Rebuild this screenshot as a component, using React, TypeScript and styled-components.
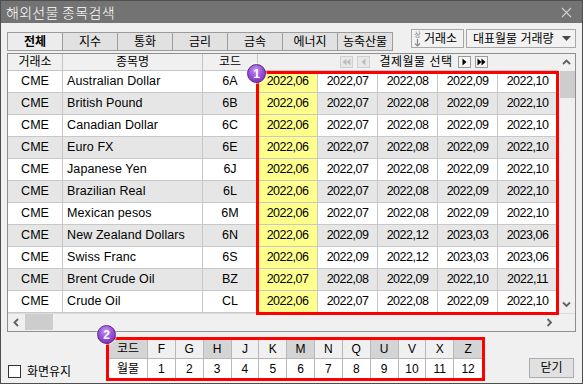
import styled, { createGlobalStyle } from 'styled-components';

const GlobalStyle = createGlobalStyle`
  html, body {
    margin: 0;
    padding: 0;
    background: #ffffff;
  }
  body {
    font-family: 'Liberation Sans', 'Noto Sans CJK KR', sans-serif;
    font-size: 12px;
    color: #000;
  }
  * {
    box-sizing: border-box;
  }
`;

type Row = { ex: string; name: string; code: string; months: string[] };

const m = (list: string) => list.split(' ');

const rows: Row[] = [
  { ex: 'CME', name: 'Australian Dollar', code: '6A', months: m('2022,06 2022,07 2022,08 2022,09 2022,10') },
  { ex: 'CME', name: 'British Pound', code: '6B', months: m('2022,06 2022,07 2022,08 2022,09 2022,10') },
  { ex: 'CME', name: 'Canadian Dollar', code: '6C', months: m('2022,06 2022,07 2022,08 2022,09 2022,10') },
  { ex: 'CME', name: 'Euro FX', code: '6E', months: m('2022,06 2022,07 2022,08 2022,09 2022,10') },
  { ex: 'CME', name: 'Japanese Yen', code: '6J', months: m('2022,06 2022,07 2022,08 2022,09 2022,10') },
  { ex: 'CME', name: 'Brazilian Real', code: '6L', months: m('2022,06 2022,07 2022,08 2022,09 2022,10') },
  { ex: 'CME', name: 'Mexican pesos', code: '6M', months: m('2022,06 2022,07 2022,08 2022,09 2022,10') },
  { ex: 'CME', name: 'New Zealand Dollars', code: '6N', months: m('2022,06 2022,09 2022,12 2023,03 2023,06') },
  { ex: 'CME', name: 'Swiss Franc', code: '6S', months: m('2022,06 2022,09 2022,12 2023,03 2023,06') },
  { ex: 'CME', name: 'Brent Crude Oil', code: 'BZ', months: m('2022,07 2022,08 2022,09 2022,10 2022,11') },
  { ex: 'CME', name: 'Crude Oil', code: 'CL', months: m('2022,06 2022,07 2022,08 2022,09 2022,10') },
];

const tabs = ['전체', '지수', '통화', '금리', '금속', '에너지', '농축산물'];

// 월물 코드표 (진한 칸 = 분기물)
const monthCodes = [
  { c: 'F', n: '1', q: false },
  { c: 'G', n: '2', q: false },
  { c: 'H', n: '3', q: true },
  { c: 'J', n: '4', q: false },
  { c: 'K', n: '5', q: false },
  { c: 'M', n: '6', q: true },
  { c: 'N', n: '7', q: false },
  { c: 'Q', n: '8', q: false },
  { c: 'U', n: '9', q: true },
  { c: 'V', n: '10', q: false },
  { c: 'X', n: '11', q: false },
  { c: 'Z', n: '12', q: true },
];

const COLS = '55px 140px 55px 60px 60px 60px 60px 60px';

function Chevron({ dir }: { dir: 'up' | 'down' | 'left' | 'right' }) {
  const pts = {
    up: '1,6 4.5,2.5 8,6',
    down: '1,2.5 4.5,6 8,2.5',
    left: '6,1 2.5,4.5 6,8',
    right: '2.5,1 6,4.5 2.5,8',
  }[dir];
  return (
    <svg width="9" height="9" viewBox="0 0 9 9">
      <polyline points={pts} fill="none" stroke="#606060" strokeWidth="1.8" />
    </svg>
  );
}

function NavGlyph({ dir, double, color }: { dir: 'l' | 'r'; double?: boolean; color: string }) {
  const one = (x: number) =>
    dir === 'l' ? `${x + 4},1.5 ${x},5 ${x + 4},8.5` : `${x},1.5 ${x + 4},5 ${x},8.5`;
  return (
    <svg width="9" height="10" viewBox="0 0 9 10">
      {double ? (
        <>
          <polygon points={one(0.5)} fill={color} />
          <polygon points={one(4.5)} fill={color} />
        </>
      ) : (
        <polygon points={one(2.5)} fill={color} />
      )}
    </svg>
  );
}

export default function App() {
  return (
    <>
      <GlobalStyle />
      <Styled.Window>
        <Styled.TitleBar>
          <Styled.Title>해외선물 종목검색</Styled.Title>
          <svg width="11" height="11" viewBox="0 0 11 11">
            <path d="M1 1 L10 10 M10 1 L1 10" stroke="#cfcfcf" strokeWidth="1.1" />
          </svg>
        </Styled.TitleBar>

        <Styled.Body>
          <Styled.TopRow>
            <Styled.Tabs>
              {tabs.map((t, i) => (
                <Styled.Tab key={t} $active={i === 0}>
                  {t}
                </Styled.Tab>
              ))}
            </Styled.Tabs>
            <Styled.Tools>
              <Styled.ExchangeBtn>
                <Styled.SortIcon>
                  <span>상</span>
                  <svg width="7" height="8" viewBox="0 0 7 8">
                    <path d="M3.5 0 V7 M1 4.5 L3.5 7 L6 4.5" fill="none" stroke="#8a8a8a" strokeWidth="1.2" />
                  </svg>
                </Styled.SortIcon>
                거래소
              </Styled.ExchangeBtn>
              <Styled.Dropdown>
                대표월물 거래량
                <svg width="9" height="5" viewBox="0 0 9 5">
                  <polygon points="0,0 9,0 4.5,5" fill="#4a4a4a" />
                </svg>
              </Styled.Dropdown>
            </Styled.Tools>
          </Styled.TopRow>

          <Styled.Grid>
            <Styled.GridMain>
              <Styled.Table>
                <Styled.HeaderRow>
                  <Styled.HeaderCell>거래소</Styled.HeaderCell>
                  <Styled.HeaderCell>종목명</Styled.HeaderCell>
                  <Styled.HeaderCell>코드</Styled.HeaderCell>
                  <Styled.MonthHeader>
                    <Styled.NavBtn $disabled>
                      <NavGlyph dir="l" double color="#bdbdbd" />
                    </Styled.NavBtn>
                    <Styled.NavBtn $disabled>
                      <NavGlyph dir="l" color="#bdbdbd" />
                    </Styled.NavBtn>
                    <Styled.MonthLabel>결제월물 선택</Styled.MonthLabel>
                    <Styled.NavBtn>
                      <NavGlyph dir="r" color="#000" />
                    </Styled.NavBtn>
                    <Styled.NavBtn>
                      <NavGlyph dir="r" double color="#000" />
                    </Styled.NavBtn>
                  </Styled.MonthHeader>
                </Styled.HeaderRow>

                {rows.map((r, i) => (
                  <Styled.Row key={r.code} $alt={i % 2 === 1}>
                    <Styled.Cell>{r.ex}</Styled.Cell>
                    <Styled.Cell $left>{r.name}</Styled.Cell>
                    <Styled.Cell>{r.code}</Styled.Cell>
                    {r.months.map((mo, j) => (
                      <Styled.DateCell key={j} $first={j === 0}>
                        {mo}
                      </Styled.DateCell>
                    ))}
                  </Styled.Row>
                ))}
              </Styled.Table>

              <Styled.VScroll>
                <Styled.ScrollArrow>
                  <Chevron dir="up" />
                </Styled.ScrollArrow>
                <Styled.VThumb />
                <Styled.Spacer />
                <Styled.ScrollArrow>
                  <Chevron dir="down" />
                </Styled.ScrollArrow>
              </Styled.VScroll>
            </Styled.GridMain>

            <Styled.HScroll>
              <Styled.ScrollArrow>
                <Chevron dir="left" />
              </Styled.ScrollArrow>
              <Styled.HThumb />
              <Styled.Spacer />
              <Styled.ScrollArrow>
                <Chevron dir="right" />
              </Styled.ScrollArrow>
              <Styled.Corner />
            </Styled.HScroll>

            <Styled.Highlight />
            <Styled.Badge $left={239} $top={10}>
              1
            </Styled.Badge>
          </Styled.Grid>

          <Styled.Bottom>
            <Styled.Keep>
              <Styled.CheckBox />
              화면유지
            </Styled.Keep>

            <Styled.CodeBox>
              <Styled.CodeGrid>
                <Styled.CodeCell $head $dark>
                  코드
                </Styled.CodeCell>
                {monthCodes.map((x) => (
                  <Styled.CodeCell key={x.c} $head $dark={x.q}>
                    {x.c}
                  </Styled.CodeCell>
                ))}
                <Styled.CodeCell>월물</Styled.CodeCell>
                {monthCodes.map((x) => (
                  <Styled.CodeCell key={x.n}>{x.n}</Styled.CodeCell>
                ))}
              </Styled.CodeGrid>
              <Styled.Badge $left={-12} $top={-15}>
                2
              </Styled.Badge>
            </Styled.CodeBox>

            <Styled.CloseBtn>닫기</Styled.CloseBtn>
          </Styled.Bottom>
        </Styled.Body>
      </Styled.Window>
    </>
  );
}

const Styled = {
  Window: styled.div`
    display: flex;
    flex-direction: column;

    width: 583px;
    height: 384px;

    border: 1px solid #4e4e4e;
    background: #f0f0f0;
  `,
  TitleBar: styled.div`
    display: flex;
    align-items: center;
    justify-content: space-between;

    height: 22px;
    padding: 0 10px 0 5px;

    background: #737373;
  `,
  Title: styled.span`
    color: #ffffff;
    font-family: 'Noto Sans CJK KR', sans-serif;
    font-size: 14px;
    font-weight: 300;
    letter-spacing: 0.3px;
    line-height: 1;
  `,
  Body: styled.div`
    display: flex;
    flex-direction: column;
    flex: 1;

    padding: 0 6px;
  `,
  TopRow: styled.div`
    display: flex;
    justify-content: space-between;
    align-items: flex-start;

    height: 30px;
  `,
  Tabs: styled.div`
    display: flex;

    margin-top: 9px;
    border-left: 1px solid #9c9c9c;
  `,
  Tab: styled.div<{ $active?: boolean }>`
    display: flex;
    align-items: center;
    justify-content: center;

    width: 55px;
    height: 19px;

    border: 1px solid #9c9c9c;
    border-left: none;
    background: ${(p) => (p.$active ? '#ececec' : '#e1e1e1')};

    font-weight: ${(p) => (p.$active ? 700 : 400)};
    line-height: 1;
  `,
  Tools: styled.div`
    display: flex;
    gap: 2px;

    margin-top: 6px;
  `,
  ExchangeBtn: styled.div`
    display: flex;
    align-items: center;
    gap: 2px;

    width: 53px;
    height: 19px;
    padding-left: 1px;

    border: 1px solid #a8a8a8;
    background: #f2f2f2;
    line-height: 1;
  `,
  SortIcon: styled.span`
    display: flex;
    flex-direction: column;
    align-items: center;

    width: 9px;

    color: #8a8a8a;
    font-size: 7px;
    line-height: 8px;
  `,
  Dropdown: styled.div`
    display: flex;
    align-items: center;
    justify-content: space-between;

    width: 110px;
    height: 19px;
    padding: 0 4px 0 6px;

    border: 1px solid #a8a8a8;
    background: #f2f2f2;
    line-height: 1;
  `,
  Grid: styled.div`
    position: relative;

    width: 569px;
    height: 279px;

    border: 1px solid #8f8f8f;
    background: #ffffff;
  `,
  GridMain: styled.div`
    display: flex;

    height: 259px;
  `,
  Table: styled.div`
    display: flex;
    flex-direction: column;

    width: 550px;
  `,
  HeaderRow: styled.div`
    display: grid;
    grid-template-columns: 55px 140px 55px 300px;

    height: 17px;

    border-bottom: 1px solid #c4c4c4;
    background: #f0f0f0;
  `,
  HeaderCell: styled.div`
    display: flex;
    align-items: center;
    justify-content: center;

    border-right: 1px solid #c4c4c4;
    line-height: 1;
  `,
  MonthHeader: styled.div`
    display: flex;
    align-items: center;

    padding-left: 82px;
    line-height: 1;
  `,
  NavBtn: styled.span<{ $disabled?: boolean }>`
    display: flex;
    align-items: center;
    justify-content: center;

    width: 13px;
    height: 12px;
    margin-right: 4px;

    border: 1px solid ${(p) => (p.$disabled ? '#cfcfcf' : '#9a9a9a')};
    background: ${(p) => (p.$disabled ? '#e8e8e8' : '#f6f6f6')};
  `,
  MonthLabel: styled.span`
    width: 84px;
    text-align: center;
    letter-spacing: 0.5px;
  `,
  Row: styled.div<{ $alt: boolean }>`
    display: grid;
    grid-template-columns: ${COLS};

    height: 22px;

    border-bottom: 1px solid #c8c8c8;
    background: ${(p) => (p.$alt ? '#e6e6e6' : '#ffffff')};
  `,
  Cell: styled.div<{ $left?: boolean }>`
    display: flex;
    align-items: center;
    justify-content: ${(p) => (p.$left ? 'flex-start' : 'center')};

    padding-left: ${(p) => (p.$left ? '4px' : '0')};
    border-right: 1px solid #c8c8c8;

    font-size: 12.5px;
    letter-spacing: ${(p) => (p.$left ? '0.1px' : '0')};
    white-space: nowrap;
    line-height: 1;
  `,
  DateCell: styled.div<{ $first?: boolean }>`
    display: flex;
    align-items: center;
    justify-content: center;

    border-right: 1px solid #c8c8c8;
    background: ${(p) => (p.$first ? '#ffff8c' : 'transparent')};

    font-size: 12.5px;
    letter-spacing: -0.5px;
    line-height: 1;
  `,
  VScroll: styled.div`
    display: flex;
    flex-direction: column;

    width: 17px;
    background: #f0f0f0;
  `,
  HScroll: styled.div`
    display: flex;

    height: 18px;
    border-top: 1px solid #dcdcdc;
    background: #f0f0f0;
  `,
  ScrollArrow: styled.div`
    display: flex;
    align-items: center;
    justify-content: center;

    width: 17px;
    height: 17px;
  `,
  VThumb: styled.div`
    height: 27px;
    margin: 0 0 0 2px;
    background: #cdcdcd;
  `,
  HThumb: styled.div`
    width: 28px;
    height: 16px;
    background: #cdcdcd;
  `,
  Spacer: styled.div`
    flex: 1;
  `,
  Corner: styled.div`
    width: 17px;
  `,
  Highlight: styled.div`
    position: absolute;
    left: 248px;
    top: 17px;

    width: 303px;
    height: 244px;

    border: 3px solid #ff0000;
    pointer-events: none;
  `,
  Badge: styled.div<{ $left: number; $top: number }>`
    position: absolute;
    left: ${(p) => p.$left}px;
    top: ${(p) => p.$top}px;
    z-index: 2;

    display: flex;
    align-items: center;
    justify-content: center;

    width: 19px;
    height: 19px;

    border: 1px solid #5d2590;
    border-radius: 50%;
    background: radial-gradient(circle at 45% 30%, #c59af2 0%, #9a52dc 45%, #6e2bb0 100%);
    box-shadow: 0 0 0 1px rgba(255, 255, 255, 0.6);

    color: #ffffff;
    font-size: 12px;
    font-weight: 700;
    line-height: 1;
  `,
  Bottom: styled.div`
    display: grid;
    grid-template-columns: 99px 379px 1fr;

    flex: 1;
  `,
  Keep: styled.label`
    display: flex;
    align-items: center;
    gap: 6px;

    align-self: end;
    margin: 0 0 5px 1px;
    height: 13px;
    line-height: 1;
  `,
  CheckBox: styled.span`
    width: 13px;
    height: 13px;

    border: 1px solid #333333;
    background: #ffffff;
  `,
  CodeBox: styled.div`
    position: relative;

    height: 44px;
    margin-top: 5px;

    border: 3px solid #ff0000;
  `,
  CodeGrid: styled.div`
    display: grid;
    grid-template-columns: 39px repeat(12, 1fr);
    grid-template-rows: 19px 19px;

    background: #ffffff;
  `,
  CodeCell: styled.div<{ $head?: boolean; $dark?: boolean }>`
    display: flex;
    align-items: center;
    justify-content: center;

    border-right: 1px solid #b8b8b8;
    border-bottom: ${(p) => (p.$head ? '1px solid #b8b8b8' : 'none')};
    background: ${(p) => (p.$head ? (p.$dark ? '#d4d4d4' : '#f0f0f0') : '#ffffff')};

    &:nth-child(13n) {
      border-right: none;
    }
    line-height: 1;
  `,
  CloseBtn: styled.div`
    display: flex;
    align-items: center;
    justify-content: center;

    justify-self: end;
    align-self: end;

    width: 45px;
    height: 20px;
    margin: 0 2px 5px 0;

    border: 1px solid #adadad;
    background: #e1e1e1;
    line-height: 1;
  `,
};
